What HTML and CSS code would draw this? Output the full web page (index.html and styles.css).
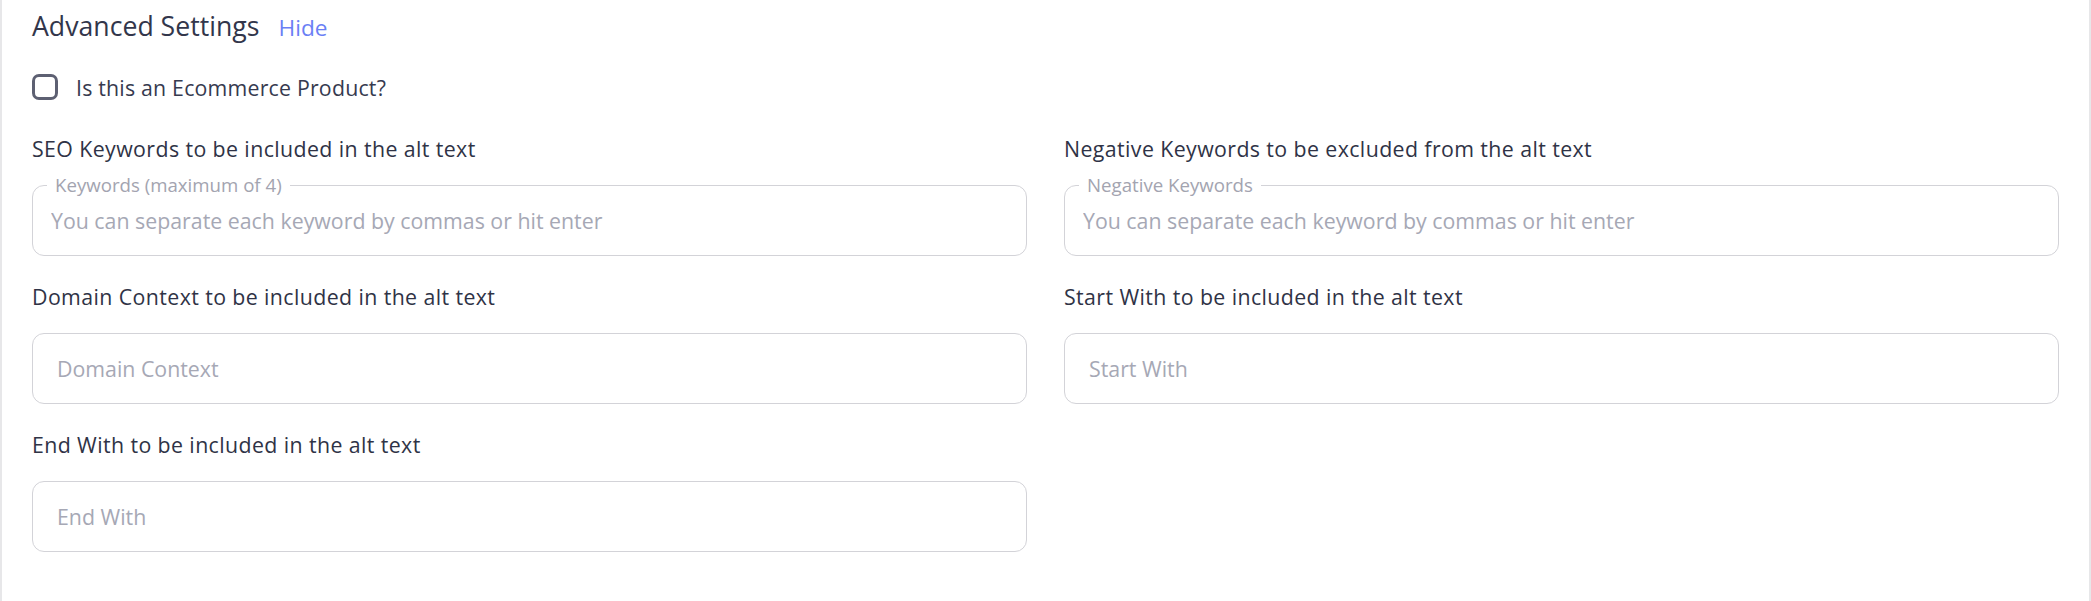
FILE: index.html
```html
<!DOCTYPE html>
<html lang="en">
<head>
<meta charset="utf-8">
<title>Advanced Settings</title>
<link rel="stylesheet" href="styles.css">
</head>
<body>
<div class="panel">
  <div class="header">
    <h2 class="title">Advanced Settings</h2>
    <a class="toggle" href="#">Hide</a>
  </div>
  <label class="check-row">
    <span class="checkbox"></span>
    <span class="check-label">Is this an Ecommerce Product?</span>
  </label>
  <div class="grid">
    <div class="field">
      <div class="label">SEO Keywords to be included in the alt text</div>
      <div class="box">
        <span class="legend">Keywords (maximum of 4)</span>
        <input class="input input-tag" type="text" placeholder="You can separate each keyword by commas or hit enter">
      </div>
    </div>
    <div class="field">
      <div class="label">Negative Keywords to be excluded from the alt text</div>
      <div class="box">
        <span class="legend">Negative Keywords</span>
        <input class="input input-tag" type="text" placeholder="You can separate each keyword by commas or hit enter">
      </div>
    </div>
    <div class="field">
      <div class="label">Domain Context to be included in the alt text</div>
      <div class="box">
        <input class="input" type="text" placeholder="Domain Context">
      </div>
    </div>
    <div class="field">
      <div class="label">Start With to be included in the alt text</div>
      <div class="box">
        <input class="input" type="text" placeholder="Start With">
      </div>
    </div>
    <div class="field">
      <div class="label">End With to be included in the alt text</div>
      <div class="box">
        <input class="input" type="text" placeholder="End With">
      </div>
    </div>
  </div>
</div>
</body>
</html>
```

FILE: styles.css
```css
* { box-sizing: border-box; }
html, body { margin: 0; padding: 0; background: #fff; }
body {
  font-family: "Open Sans", "Noto Sans", sans-serif;
  color: #2f3346;
}
.panel {
  min-height: 601px;
  border-left: 2px solid #e7e7e9;
  border-right: 2px solid #e7e7e9;
  padding: 8px 30px 0 30px;
}
.header {
  display: flex;
  align-items: baseline;
  gap: 19px;
  height: 36px;
}
.title {
  margin: 0;
  font-size: 26.67px;
  font-weight: 400;
  line-height: 36px;
  color: #32364b;
}
.toggle {
  font-size: 22.67px;
  color: #6b7ff5;
  text-decoration: none;
}
.check-row {
  display: flex;
  align-items: center;
  gap: 18px;
  margin-top: 30px;
  height: 26px;
}
.checkbox {
  width: 26px;
  height: 26px;
  border: 3px solid #5d6072;
  border-radius: 7px;
  flex: none;
}
.check-label {
  font-size: 21.33px;
  letter-spacing: 0.2px;
  color: #363a4f;
}
.grid {
  display: grid;
  grid-template-columns: 1fr 1fr;
  column-gap: 37px;
  margin-top: 34px;
}
.field {
  display: flex;
  flex-direction: column;
  padding-bottom: 26px;
}
.label {
  font-size: 21.33px;
  letter-spacing: 0.4px;
  line-height: 30px;
  height: 30px;
  color: #2f3346;
  margin-bottom: 21px;
}
.box {
  position: relative;
  height: 71px;
  border: 1.5px solid #d3d3d8;
  border-radius: 12px;
  display: flex;
  align-items: center;
}
.legend {
  position: absolute;
  top: -13px;
  left: 14px;
  padding: 0 8px;
  background: #fff;
  font-size: 18.67px;
  line-height: 24px;
  color: #a3a4b0;
}
.input {
  border: 0;
  outline: none;
  background: transparent;
  width: 100%;
  font-family: inherit;
  font-size: 21.33px;
  color: #2f3346;
  padding: 0 24px;
}
.input-tag { padding: 0 18px; }
.input::placeholder { color: #a6a8b5; }
```
